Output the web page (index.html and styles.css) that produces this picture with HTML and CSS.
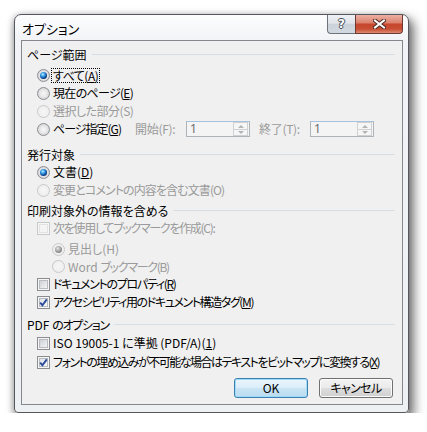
FILE: index.html
```html
<!DOCTYPE html>
<html lang="ja">
<head>
<meta charset="utf-8">
<title>オプション</title>
<link rel="stylesheet" href="styles.css">
</head>
<body>
<div class="window">
  <div class="titlebar">
    <span class="title">オプション</span>
    <div class="caption">
      <div class="cbtn help"><span class="qmark">?</span></div>
      <div class="cbtn close">
        <svg width="13" height="10" viewBox="0 0 13 10"><path d="M2 1.5 L11 8.5 M11 1.5 L2 8.5" stroke="#4a2a24" stroke-width="4" stroke-linecap="square"/><path d="M2 1.5 L11 8.5 M11 1.5 L2 8.5" stroke="#ffffff" stroke-width="2" stroke-linecap="square"/></svg>
      </div>
    </div>
  </div>
  <div class="client">
    <div class="ghead g1"><span>ページ範囲</span><i class="gline"></i></div>
    <div class="row first"><span class="radio checked"></span><span class="lbl focus ls5">すべて(<u>A</u>)</span></div>
    <div class="row"><span class="radio"></span><span class="lbl ls7">現在のページ(<u>E</u>)</span></div>
    <div class="row"><span class="radio dis"></span><span class="lbl dis ls5">選択した部分(S)</span></div>
    <div class="row"><span class="radio"></span><span class="lbl w82 ls10">ページ指定(<u>G</u>)</span><span class="lbl dis w51 nm ls3">開始(F):</span><span class="spin"><span class="spin-val">1</span><span class="spin-btns"><i class="up"></i><i class="down"></i></span></span><span class="lbl dis w51 ml9 ls3">終了(T):</span><span class="spin"><span class="spin-val">1</span><span class="spin-btns"><i class="up"></i><i class="down"></i></span></span></div>

    <div class="ghead g2"><span>発行対象</span><i class="gline"></i></div>
    <div class="row"><span class="radio checked"></span><span class="lbl">文書(<u>D</u>)</span></div>
    <div class="row"><span class="radio dis"></span><span class="lbl dis ls9">変更とコメントの内容を含む文書(O)</span></div>

    <div class="ghead g3"><span>印刷対象外の情報を含める</span><i class="gline"></i></div>
    <div class="row"><span class="check dis"></span><span class="lbl dis ls13">次を使用してブックマークを作成(C):</span></div>
    <div class="row sub first-sub"><span class="radio dis checked"></span><span class="lbl dis">見出し(H)</span></div>
    <div class="row sub h17"><span class="radio dis"></span><span class="lbl dis ls13"><span class="lat">Word </span>ブックマーク(B)</span></div>
    <div class="row"><span class="check"></span><span class="lbl ls13">ドキュメントのプロパティ(<u>R</u>)</span></div>
    <div class="row"><span class="check checked"><svg width="11" height="11" viewBox="0 0 11 11"><path d="M2.2 5.6 L4.4 8.2 L8.8 2.4" fill="none" stroke="#2b4a9a" stroke-width="1.9"/></svg></span><span class="lbl ls14">アクセシビリティ用のドキュメント構造タグ(<u>M</u>)</span></div>

    <div class="ghead g4"><span class="ls13"><span class="lat">PDF </span>のオプション</span><i class="gline"></i></div>
    <div class="row first-pdf"><span class="check"></span><span class="lbl">ISO 19005-1 に準拠 (PDF/A)(<u>1</u>)</span></div>
    <div class="row pdf2"><span class="check checked"><svg width="11" height="11" viewBox="0 0 11 11"><path d="M2.2 5.6 L4.4 8.2 L8.8 2.4" fill="none" stroke="#2b4a9a" stroke-width="1.9"/></svg></span><span class="lbl ls15">フォントの埋め込みが不可能な場合はテキストをビットマップに変換する(<u>X</u>)</span></div>

    <div class="buttons">
      <div class="btn default">OK</div>
      <div class="btn ls6">キャンセル</div>
    </div>
  </div>
</div>
</body>
</html>
```

FILE: styles.css
```css
* { box-sizing: border-box; }
html, body { margin: 0; padding: 0; background: #ffffff; }
body {
  font-family: "Noto Sans CJK JP", "Noto Sans", sans-serif;
  font-size: 12px;
  color: #000;
  font-feature-settings: "palt";
}

.window {
  margin: 14px 0 0 14px;
  width: 395px;
  height: 399px;
  border: 1px solid #55595e;
  border-radius: 7px 7px 4px 4px;
  background: linear-gradient(#fdfdfe, #f1f3f6 26px, #eef1f4);
  box-shadow: 4px 6px 11px 1px rgba(0,0,0,.55), -1px 1px 6px rgba(0,0,0,.22);
  padding: 0 5px 7px 6px;
  display: flex;
  flex-direction: column;
}

.titlebar {
  height: 25px;
  display: flex;
  flex: none;
}
.title {
  font-size: 13px;
  line-height: 16px;
  margin: 6px 0 0 1px;
}
.caption {
  margin-left: auto;
  display: flex;
  height: 19px;
}
.cbtn {
  height: 19px;
  display: flex;
  align-items: center;
  justify-content: center;
  border: 1px solid #6e737a;
  border-top: none;
}
.help {
  width: 28px;
  border-right: none;
  border-radius: 0 0 0 4px;
  background: linear-gradient(#eef1f5, #e0e5ea 45%, #ccd2d9 52%, #d3d9e0 100%);
}
.qmark {
  font-family: "DejaVu Sans", sans-serif;
  font-weight: bold;
  font-size: 12px;
  color: #fff;
  line-height: 12px;
  text-shadow: 1px 0 #444a52, -1px 0 #444a52, 0 1px #444a52, 0 -1px #444a52;
}
.close {
  width: 48px;
  border-color: #6b3b33;
  border-radius: 0 0 4px 0;
  background: linear-gradient(#ebb0a4, #dc8470 42%, #c7462c 52%, #c84f34 78%, #dd8a74 100%);
}

.client {
  height: 365px;
  border: 1px solid #84878c;
  background: #f0f0f0;
  padding: 4px 7px 0 5px;
  display: flex;
  flex-direction: column;
  flex: none;
}

.ghead {
  height: 18px;
  display: flex;
  align-items: center;
  flex: none;
}
.ghead > span { white-space: nowrap; }
.gline {
  flex: 1;
  height: 1px;
  background: #d5dfe5;
  margin-left: 5px;
}
.g2 { margin-top: 7px; }
.g3 { margin-top: 2px; }
.g4 { margin-top: 4px; }

.row {
  height: 18px;
  display: flex;
  align-items: center;
  padding-left: 10px;
  flex: none;
}
.row.first { margin-top: 3px; }
.row.sub { padding-left: 25px; }
.row.first-sub { margin-top: 3px; }
.row.h17 { height: 17px; }
.row.first-pdf { margin-top: 1px; }
.row.pdf2 { margin-top: 1px; }

.lbl {
  margin-left: 3px;
  white-space: nowrap;
  line-height: 16px;
}
.lbl u { text-underline-offset: 1px; }
.lbl.dis { color: #9a9a9a; }
.lbl.focus { outline: 1px dotted #000; outline-offset: 0; padding: 0 1px; margin-left: 2px; line-height: 13px; }
.lbl.w82 { width: 82px; }
.lbl.w51 { width: 51px; }
.lbl.nm { margin-left: 0; }
.lbl.ml9 { margin-left: 9px; }

.ls3 { letter-spacing: -0.3px; }
.ls5 { letter-spacing: -0.5px; }
.ls6 { letter-spacing: -0.6px; }
.ls7 { letter-spacing: -0.7px; }
.ls9 { letter-spacing: -0.9px; }
.ls10 { letter-spacing: -1px; }
.ls13 { letter-spacing: -1.3px; }
.ls14 { letter-spacing: -1.4px; }
.ls15 { letter-spacing: -1.5px; }
.lat { letter-spacing: 0; }

.radio {
  width: 13px;
  height: 13px;
  border-radius: 50%;
  border: 1px solid #8b8d90;
  background: radial-gradient(circle at 50% 50%, #f7f7f7 0, #eaeaea 3px, #d4d5d7 6px);
  position: relative;
  flex: none;
}
.radio.checked::after {
  content: "";
  position: absolute;
  left: 2px;
  top: 2px;
  width: 7px;
  height: 7px;
  border-radius: 50%;
  background: radial-gradient(circle at 40% 35%, #c4ecff 0, #4fb3ef 1.5px, #1a6cc4 3px, #0d3f80 4px);
}
.radio.dis {
  border-color: #c8c9ca;
  background: radial-gradient(circle, #f6f6f6 0, #eeeeee 6px);
}
.radio.dis.checked::after {
  background: radial-gradient(circle at 40% 35%, #e8e8e8 0, #b5b5b5 2px, #8c8c8c 4px);
}

.check {
  width: 13px;
  height: 13px;
  border: 1px solid #8b8d90;
  background: #f6f6f6;
  position: relative;
  flex: none;
}
.check::before {
  content: "";
  position: absolute;
  left: 1px; top: 1px; right: 1px; bottom: 1px;
  border: 1px solid #b8bbbf;
  background: linear-gradient(135deg, #cdd1d6, #f4f4f5);
}
.check svg { position: absolute; left: 0; top: 0; }
.check.checked::before { background: linear-gradient(135deg, #dfe2e6, #f7f7f8); }
.check.dis { border-color: #c8c9ca; }
.check.dis::before { border-color: #e2e2e2; background: #f4f4f4; }

.spin {
  width: 64px;
  height: 16px;
  border: 1px solid #aeb3b8;
  border-top-color: #a5c2df;
  background: #f4f4f4;
  display: flex;
  flex: none;
}
.spin-val {
  flex: 1;
  color: #6d6d6d;
  font-family: "Noto Sans", sans-serif;
  font-size: 12px;
  line-height: 14px;
  padding-left: 3px;
}
.spin-btns {
  width: 15px;
  display: flex;
  flex-direction: column;
  margin: 0 1px 0 0;
}
.spin-btns i {
  flex: 1;
  border: 1px solid #cfd1d3;
  background: #f6f6f6;
  position: relative;
}
.spin-btns i.down { border-top: none; }
.spin-btns i::after {
  content: "";
  position: absolute;
  left: 4px;
  top: 2px;
  border-left: 3px solid transparent;
  border-right: 3px solid transparent;
}
.spin-btns i.up::after { border-bottom: 3px solid #b4b4b4; }
.spin-btns i.down::after { top: 1px; border-top: 3px solid #b4b4b4; }

.buttons {
  display: flex;
  justify-content: flex-end;
  gap: 11px;
  margin-top: 7px;
  padding-right: 2px;
}
.btn {
  width: 74px;
  height: 20px;
  border: 1px solid #707070;
  border-radius: 3px;
  background: linear-gradient(#f3f3f3 0, #ebebeb 48%, #dddddd 52%, #d0d0d0 100%);
  box-shadow: inset 0 0 0 1px #fbfbfb;
  display: flex;
  align-items: center;
  justify-content: center;
  line-height: 16px;
}
.btn.default {
  border-color: #3c7fb1;
  background: linear-gradient(#eaf5fc 0, #dceef9 48%, #c9e4f5 52%, #bcdcf0 100%);
  box-shadow: inset 0 0 0 1px #9fdcf8;
}
```
